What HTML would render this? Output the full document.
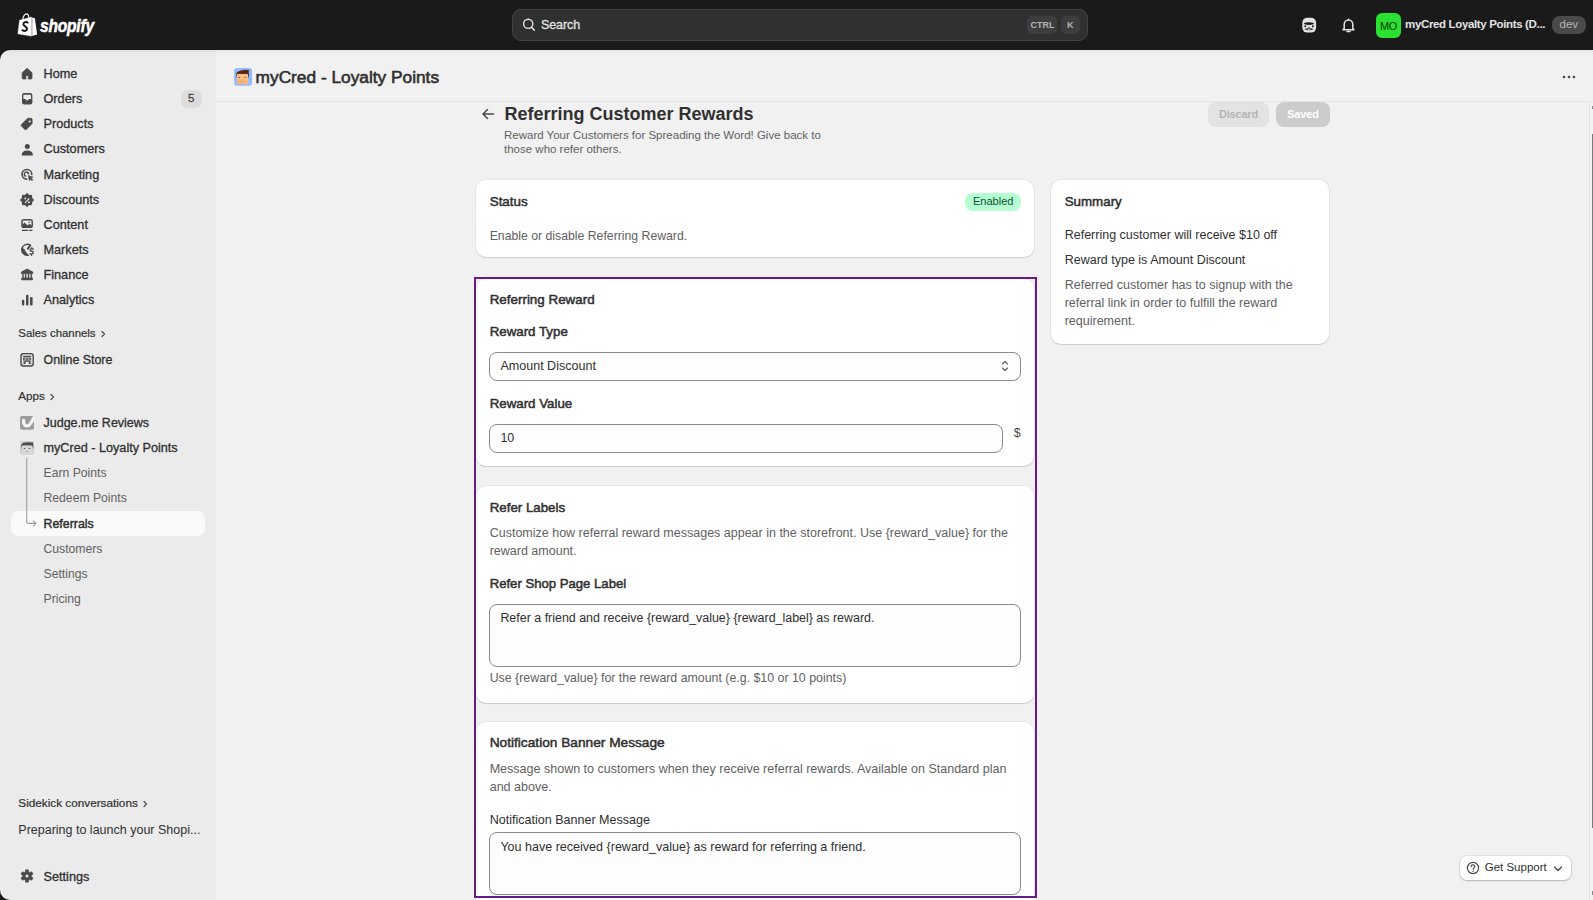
<!DOCTYPE html>
<html><head><meta charset="utf-8">
<style>
*{box-sizing:border-box;margin:0;padding:0}
html,body{width:1593px;height:900px;overflow:hidden;background:#1a1a1a;font-family:"Liberation Sans",sans-serif;color:#303030;position:relative}
.t{position:absolute;white-space:nowrap}
svg{overflow:visible}
</style></head><body>
<div style="position:absolute;left:0px;top:0px;width:1593px;height:50px;background:#1a1a1a"></div>
<svg style="position:absolute;left:17px;top:13px;" width="21" height="24" viewBox="0 0 21 24"><path d="M2.6 7.3 L14.5 4.1 L14.5 23.1 L0.9 20.8 Z" fill="#fff" stroke="#fff" stroke-width="0.5" stroke-linejoin="round"/><path d="M15.2 4.4 L17.9 5.3 L20.1 21.4 L15.2 23.1 Z" fill="#fff"/><path d="M5.8 6.6 C6 3 8 0.9 9.4 0.9 C10.8 0.9 11.6 2.2 11.8 4.6" stroke="#fff" stroke-width="1.1" fill="none"/><path d="M10.6 9.6 C9.4 8.6 6.4 8.8 6.4 11.2 C6.4 13.4 10 13.4 10 15.8 C10 18 7.2 18.4 5.4 17.2" stroke="#1a1a1a" stroke-width="2" fill="none" stroke-linecap="round"/></svg>
<div class="t" style="left:40px;top:16.00px;font-size:18px;line-height:20px;font-weight:bold;color:#fff;font-style:italic;transform:scaleX(0.87);transform-origin:0 0;letter-spacing:-0.3px;-webkit-text-stroke:0.5px #fff">shopify</div>
<div style="position:absolute;left:512px;top:9px;width:576px;height:32px;background:#303030;border:1px solid #444;border-radius:9px;box-sizing:border-box"></div>
<svg style="position:absolute;left:521px;top:17px;" width="16" height="16" viewBox="0 0 16 16"><circle cx="7.2" cy="6.8" r="4.6" stroke="#e3e3e3" stroke-width="1.4" fill="none"/><path d="M10.6 10.4 L13.4 13.2" stroke="#e3e3e3" stroke-width="1.5" stroke-linecap="round"/></svg>
<div class="t" style="left:541px;top:17.00px;font-size:12.5px;line-height:16px;font-weight:normal;color:#e3e3e3;-webkit-text-stroke:0.3px #e3e3e3;letter-spacing:-0.1px">Search</div>
<div style="position:absolute;left:1027px;top:16px;width:30px;height:18px;background:#3d3d3d;border-radius:5px"></div>
<div class="t" style="left:1030.5px;top:19.00px;font-size:9px;line-height:12px;font-weight:bold;color:#b5b5b5;">CTRL</div>
<div style="position:absolute;left:1061px;top:16px;width:19px;height:18px;background:#3d3d3d;border-radius:5px"></div>
<div class="t" style="left:1067px;top:19.00px;font-size:9px;line-height:12px;font-weight:bold;color:#b5b5b5;">K</div>
<svg style="position:absolute;left:1300px;top:16px;" width="18" height="18" viewBox="0 0 18 18"><rect x="2.3" y="1.8" width="13.8" height="14.8" rx="5" fill="#e3e3e3"/><path d="M3.9 6.9 Q9 5.4 13.9 6.9 L13.3 8.3 Q9 9.8 4.5 8.3 Z" fill="#1a1a1a"/><circle cx="5.3" cy="10.2" r="0.95" fill="#1a1a1a"/><circle cx="12.9" cy="10.2" r="0.95" fill="#1a1a1a"/><circle cx="9.1" cy="11.8" r="0.7" fill="#1a1a1a"/><path d="M4.4 13.1 Q9 11.4 13.8 13.1 Q9 15.6 4.4 13.1 Z" fill="#1a1a1a"/><ellipse cx="9.1" cy="13.2" rx="1.7" ry="0.55" fill="#e3e3e3"/></svg>
<svg style="position:absolute;left:1340px;top:17px;" width="17" height="17" viewBox="0 0 17 17"><path d="M4.2 11.6 V7.6 C4.2 5 6 3 8.5 3 C11 3 12.8 5 12.8 7.6 V11.6 L14 12.8 H3 Z" stroke="#e3e3e3" stroke-width="1.5" fill="none" stroke-linejoin="round"/><path d="M7 14.6 H10" stroke="#e3e3e3" stroke-width="1.5" stroke-linecap="round"/><path d="M8.5 1.6 V3" stroke="#e3e3e3" stroke-width="1.4"/></svg>
<div style="position:absolute;left:1376px;top:13px;width:25px;height:25px;background:#2ae031;border-radius:6px"></div>
<div class="t" style="left:1380px;top:19.00px;font-size:11px;line-height:14px;font-weight:normal;color:#0a3a0a;letter-spacing:-0.3px">MO</div>
<div class="t" style="left:1405px;top:17.00px;font-size:11.5px;line-height:15px;font-weight:bold;color:#e3e3e3;letter-spacing:-0.35px">myCred Loyalty Points (D...</div>
<div style="position:absolute;left:1552px;top:16px;width:34px;height:18px;background:#4a4a4a;border-radius:8px"></div>
<div class="t" style="left:1559.5px;top:17.00px;font-size:11.5px;line-height:15px;font-weight:normal;color:#b5b5b5;">dev</div>
<div style="position:absolute;left:0px;top:50px;width:216px;height:850px;background:#ebebeb;border-top-left-radius:10px;border-bottom-left-radius:10px"></div>
<div class="t" style="left:43.5px;top:66.00px;font-size:12.7px;line-height:17px;font-weight:normal;color:#303030;-webkit-text-stroke:0.3px #303030">Home</div>
<svg style="position:absolute;left:17px;top:64px;" width="20" height="20" viewBox="0 0 20 20"><path d="M10.1 4.3 L15 8.7 V14 Q15 15 14 15 H11.3 V11.4 H8.9 V15 H6.2 Q5.2 15 5.2 14 V8.7 Z" fill="#4a4a4a" stroke="#4a4a4a" stroke-width="0.8" stroke-linejoin="round"/></svg>
<div class="t" style="left:43.5px;top:91.00px;font-size:12.7px;line-height:17px;font-weight:normal;color:#303030;-webkit-text-stroke:0.3px #303030">Orders</div>
<svg style="position:absolute;left:17px;top:89px;" width="20" height="20" viewBox="0 0 20 20"><rect x="5" y="4.1" width="10.4" height="11.5" rx="2.3" fill="#4a4a4a"/><path d="M6.5 5.7 H13.9 L14.1 10 H12.2 L10.2 11.8 L8.2 10 H6.3 Z" fill="#ebebeb"/></svg>
<div class="t" style="left:43.5px;top:116.00px;font-size:12.7px;line-height:17px;font-weight:normal;color:#303030;-webkit-text-stroke:0.3px #303030">Products</div>
<svg style="position:absolute;left:17px;top:114px;" width="20" height="20" viewBox="0 0 20 20"><path d="M10.6 4.3 H14 Q15.2 4.3 15.2 5.5 V9.6 L9.4 15.5 Q8.6 16.2 7.8 15.5 L4.4 12.1 Q3.7 11.3 4.4 10.6 Z" fill="#4a4a4a" stroke="#4a4a4a" stroke-width="0.6" stroke-linejoin="round"/><circle cx="12.7" cy="7.5" r="1.1" fill="#ebebeb"/></svg>
<div class="t" style="left:43.5px;top:141.00px;font-size:12.7px;line-height:17px;font-weight:normal;color:#303030;-webkit-text-stroke:0.3px #303030">Customers</div>
<svg style="position:absolute;left:17px;top:139.5px;" width="20" height="20" viewBox="0 0 20 20"><circle cx="10.3" cy="6.4" r="2.5" fill="#4a4a4a"/><path d="M4.7 15.6 Q4.7 10.6 10.3 10.6 Q15.9 10.6 15.9 15.6 Z" fill="#4a4a4a"/></svg>
<div class="t" style="left:43.5px;top:167.00px;font-size:12.7px;line-height:17px;font-weight:normal;color:#303030;-webkit-text-stroke:0.3px #303030">Marketing</div>
<svg style="position:absolute;left:17px;top:165px;" width="20" height="20" viewBox="0 0 20 20"><path d="M14.8 9.4 A4.9 4.9 0 1 0 9.8 14.3" stroke="#4a4a4a" stroke-width="1.6" fill="none" stroke-linecap="round"/><path d="M11.6 8.8 A2.2 2.2 0 1 0 8.4 11.2" stroke="#4a4a4a" stroke-width="1.5" fill="none" stroke-linecap="round"/><path d="M11.3 10.6 L16.1 12.1 L14.1 13 L15.9 14.8 L14.9 15.8 L13.1 14 L12.3 15.9 Z" fill="#4a4a4a" stroke="#4a4a4a" stroke-width="0.5" stroke-linejoin="round"/></svg>
<div class="t" style="left:43.5px;top:192.00px;font-size:12.7px;line-height:17px;font-weight:normal;color:#303030;-webkit-text-stroke:0.3px #303030">Discounts</div>
<svg style="position:absolute;left:17px;top:190px;" width="20" height="20" viewBox="0 0 20 20"><path d="M10.00 3.20 L10.27 3.23 L10.52 3.34 L10.77 3.49 L11.00 3.69 L11.21 3.92 L11.40 4.15 L11.59 4.37 L11.77 4.57 L11.95 4.72 L12.14 4.83 L12.36 4.89 L12.59 4.91 L12.86 4.90 L13.14 4.87 L13.44 4.84 L13.75 4.83 L14.06 4.85 L14.34 4.92 L14.60 5.03 L14.81 5.19 L14.97 5.40 L15.08 5.66 L15.15 5.94 L15.17 6.25 L15.16 6.56 L15.13 6.86 L15.10 7.14 L15.09 7.41 L15.11 7.64 L15.17 7.86 L15.28 8.05 L15.43 8.23 L15.63 8.41 L15.85 8.60 L16.08 8.79 L16.31 9.00 L16.51 9.23 L16.66 9.48 L16.77 9.73 L16.80 10.00 L16.77 10.27 L16.66 10.52 L16.51 10.77 L16.31 11.00 L16.08 11.21 L15.85 11.40 L15.63 11.59 L15.43 11.77 L15.28 11.95 L15.17 12.14 L15.11 12.36 L15.09 12.59 L15.10 12.86 L15.13 13.14 L15.16 13.44 L15.17 13.75 L15.15 14.06 L15.08 14.34 L14.97 14.60 L14.81 14.81 L14.60 14.97 L14.34 15.08 L14.06 15.15 L13.75 15.17 L13.44 15.16 L13.14 15.13 L12.86 15.10 L12.59 15.09 L12.36 15.11 L12.14 15.17 L11.95 15.28 L11.77 15.43 L11.59 15.63 L11.40 15.85 L11.21 16.08 L11.00 16.31 L10.77 16.51 L10.52 16.66 L10.27 16.77 L10.00 16.80 L9.73 16.77 L9.48 16.66 L9.23 16.51 L9.00 16.31 L8.79 16.08 L8.60 15.85 L8.41 15.63 L8.23 15.43 L8.05 15.28 L7.86 15.17 L7.64 15.11 L7.41 15.09 L7.14 15.10 L6.86 15.13 L6.56 15.16 L6.25 15.17 L5.94 15.15 L5.66 15.08 L5.40 14.97 L5.19 14.81 L5.03 14.60 L4.92 14.34 L4.85 14.06 L4.83 13.75 L4.84 13.44 L4.87 13.14 L4.90 12.86 L4.91 12.59 L4.89 12.36 L4.83 12.14 L4.72 11.95 L4.57 11.77 L4.37 11.59 L4.15 11.40 L3.92 11.21 L3.69 11.00 L3.49 10.77 L3.34 10.52 L3.23 10.27 L3.20 10.00 L3.23 9.73 L3.34 9.48 L3.49 9.23 L3.69 9.00 L3.92 8.79 L4.15 8.60 L4.37 8.41 L4.57 8.23 L4.72 8.05 L4.83 7.86 L4.89 7.64 L4.91 7.41 L4.90 7.14 L4.87 6.86 L4.84 6.56 L4.83 6.25 L4.85 5.94 L4.92 5.66 L5.03 5.40 L5.19 5.19 L5.40 5.03 L5.66 4.92 L5.94 4.85 L6.25 4.83 L6.56 4.84 L6.86 4.87 L7.14 4.90 L7.41 4.91 L7.64 4.89 L7.86 4.83 L8.05 4.72 L8.23 4.57 L8.41 4.37 L8.60 4.15 L8.79 3.92 L9.00 3.69 L9.23 3.49 L9.48 3.34 L9.73 3.23 Z" fill="#4a4a4a"/><circle cx="8.2" cy="8.4" r="0.95" fill="#ebebeb"/><circle cx="12" cy="12.2" r="0.95" fill="#ebebeb"/><path d="M8.3 12.6 L12 8.6" stroke="#ebebeb" stroke-width="1.1" stroke-linecap="round"/></svg>
<div class="t" style="left:43.5px;top:217.00px;font-size:12.7px;line-height:17px;font-weight:normal;color:#303030;-webkit-text-stroke:0.3px #303030">Content</div>
<svg style="position:absolute;left:17px;top:215px;" width="20" height="20" viewBox="0 0 20 20"><rect x="5" y="4.8" width="10.2" height="7.4" rx="1.8" stroke="#4a4a4a" stroke-width="1.5" fill="none"/><path d="M5 10.2 L7.6 7.6 L10.6 10.6 L12.6 8.8 L15.2 11 V12.4 H5 Z" fill="#4a4a4a"/><circle cx="12.1" cy="7.3" r="0.8" fill="#4a4a4a"/><path d="M5.3 15.4 H10.9 M12.6 15.4 H15.1" stroke="#4a4a4a" stroke-width="1.1" stroke-linecap="round"/></svg>
<div class="t" style="left:43.5px;top:242.00px;font-size:12.7px;line-height:17px;font-weight:normal;color:#303030;-webkit-text-stroke:0.3px #303030">Markets</div>
<svg style="position:absolute;left:17px;top:238px;" width="20" height="20" viewBox="0 0 20 20"><path d="M13.6 7.4 A5.5 5.5 0 1 0 11.2 17.2" stroke="#4a4a4a" stroke-width="1.5" fill="none" stroke-linecap="round"/><path d="M4.8 9.6 Q6.6 10.4 7.8 11.6 Q8.2 13.6 9.4 14.6 Q10.8 15.6 11.2 17.4 Q7.6 17.6 5.6 15 Q4.2 12.6 4.8 9.6 Z" fill="#4a4a4a"/><path d="M12.8 8 L10.9 10.6" stroke="#4a4a4a" stroke-width="2.1" stroke-linecap="round"/><path d="M16.3 10.9 H14.3 Q13.1 10.9 13.1 12.1 Q13.1 13.2 14.3 13.2 H15 Q16.3 13.2 16.3 14.5 Q16.3 15.8 15 15.8 H12.9 M14.8 9.6 V10.9 M14.5 15.8 V17.3" stroke="#4a4a4a" stroke-width="1.35" fill="none" stroke-linecap="round" stroke-linejoin="round"/></svg>
<div class="t" style="left:43.5px;top:267.00px;font-size:12.7px;line-height:17px;font-weight:normal;color:#303030;-webkit-text-stroke:0.3px #303030">Finance</div>
<svg style="position:absolute;left:17px;top:265px;" width="20" height="20" viewBox="0 0 20 20"><path d="M10.1 4 L15.8 7 V8.6 H4.4 V7 Z" fill="#4a4a4a" stroke="#4a4a4a" stroke-width="0.8" stroke-linejoin="round"/><rect x="4.3" y="12.6" width="11.6" height="2.7" rx="0.8" fill="#4a4a4a"/><path d="M6 8.4 V12.8 M8.6 8.4 V12.8 M11.5 8.4 V12.8 M14.2 8.4 V12.8" stroke="#4a4a4a" stroke-width="1.4"/></svg>
<div class="t" style="left:43.5px;top:292.00px;font-size:12.7px;line-height:17px;font-weight:normal;color:#303030;-webkit-text-stroke:0.3px #303030">Analytics</div>
<svg style="position:absolute;left:17px;top:290px;" width="20" height="20" viewBox="0 0 20 20"><rect x="4.9" y="9.8" width="2.4" height="5.7" rx="1" fill="#4a4a4a"/><rect x="9" y="4.8" width="2.5" height="10.7" rx="1" fill="#4a4a4a"/><rect x="13" y="7" width="2.6" height="8.5" rx="1" fill="#4a4a4a"/></svg>
<svg style="position:absolute;left:17px;top:350px;" width="20" height="20" viewBox="0 0 20 20"><rect x="4" y="3.6" width="12.2" height="12.4" rx="2.2" fill="#a8a8a8" stroke="#4a4a4a" stroke-width="1.4"/><rect x="5.4" y="5" width="9.4" height="9.6" rx="1.2" fill="none" stroke="#f0f0f0" stroke-width="0.9"/><path d="M6.4 6.5 H13.8" stroke="#4a4a4a" stroke-width="1"/><rect x="6.1" y="8.2" width="1.6" height="1.6" fill="#4a4a4a"/><rect x="9.3" y="8.2" width="1.6" height="1.6" fill="#4a4a4a"/><rect x="12.4" y="8.2" width="1.6" height="1.6" fill="#4a4a4a"/><path d="M7.8 14 V11.8 Q7.8 11 8.6 11 H11.8 Q12.6 11 12.6 11.8 V14" stroke="#4a4a4a" stroke-width="1.2" fill="none"/><rect x="9.1" y="12" width="2.2" height="2.6" fill="#f5f5f5"/></svg>
<svg style="position:absolute;left:17px;top:413px;" width="20" height="20" viewBox="0 0 20 20"><rect x="3" y="3" width="14" height="13.8" rx="2" fill="#9c9c9c"/><path d="M6.6 7.4 Q6.2 12.6 10 13 Q12.6 13.2 16.6 5.2" stroke="#f5f5f5" stroke-width="3.2" fill="none" stroke-linecap="round"/></svg>
<svg style="position:absolute;left:17px;top:438.25px;" width="20" height="20" viewBox="0 0 20 20"><rect x="3" y="3" width="14" height="13.6" rx="2" fill="#cfcfcf"/><path d="M4.6 16.6 V8.4 H15.4 V16.6 Z" fill="#d8d8d8"/><path d="M4 11.4 Q3.6 5.4 6.4 4.8 Q10 3.8 14.2 4.4 L15.8 4.2 Q16.6 6 16.2 11.4 L15.4 7.6 Q10 7 4.8 7.6 Z" fill="#4a4a4a"/><rect x="6.6" y="10" width="1.8" height="0.9" rx="0.4" fill="#555"/><rect x="11.6" y="10" width="1.8" height="0.9" rx="0.4" fill="#555"/><path d="M8.6 13.6 H11.4" stroke="#9a9a9a" stroke-width="0.7"/></svg>
<svg style="position:absolute;left:17px;top:866px;" width="20" height="20" viewBox="0 0 20 20"><path d="M10.00 3.70 L10.33 3.71 L10.66 3.73 L10.99 3.78 L11.31 3.84 L11.51 4.37 L11.56 5.21 L11.58 5.89 L11.79 5.98 L12.00 6.08 L12.20 6.19 L12.40 6.31 L12.59 6.44 L12.77 6.58 L13.37 6.26 L14.12 5.88 L14.68 5.78 L14.90 6.04 L15.10 6.30 L15.28 6.57 L15.46 6.85 L15.61 7.14 L15.76 7.44 L15.88 7.74 L15.99 8.05 L15.63 8.49 L14.92 8.95 L14.35 9.31 L14.38 9.54 L14.39 9.77 L14.40 10.00 L14.39 10.23 L14.38 10.46 L14.35 10.69 L14.92 11.05 L15.63 11.51 L15.99 11.95 L15.88 12.26 L15.76 12.56 L15.61 12.86 L15.46 13.15 L15.28 13.43 L15.10 13.70 L14.90 13.96 L14.68 14.22 L14.12 14.12 L13.37 13.74 L12.77 13.42 L12.59 13.56 L12.40 13.69 L12.20 13.81 L12.00 13.92 L11.79 14.02 L11.58 14.11 L11.56 14.79 L11.51 15.63 L11.31 16.16 L10.99 16.22 L10.66 16.27 L10.33 16.29 L10.00 16.30 L9.67 16.29 L9.34 16.27 L9.01 16.22 L8.69 16.16 L8.49 15.63 L8.44 14.79 L8.42 14.11 L8.21 14.02 L8.00 13.92 L7.80 13.81 L7.60 13.69 L7.41 13.56 L7.23 13.42 L6.63 13.74 L5.88 14.12 L5.32 14.22 L5.10 13.96 L4.90 13.70 L4.72 13.43 L4.54 13.15 L4.39 12.86 L4.24 12.56 L4.12 12.26 L4.01 11.95 L4.37 11.51 L5.08 11.05 L5.65 10.69 L5.62 10.46 L5.61 10.23 L5.60 10.00 L5.61 9.77 L5.62 9.54 L5.65 9.31 L5.08 8.95 L4.37 8.49 L4.01 8.05 L4.12 7.74 L4.24 7.44 L4.39 7.14 L4.54 6.85 L4.72 6.57 L4.90 6.30 L5.10 6.04 L5.32 5.78 L5.88 5.88 L6.63 6.26 L7.23 6.58 L7.41 6.44 L7.60 6.31 L7.80 6.19 L8.00 6.08 L8.21 5.98 L8.42 5.89 L8.44 5.21 L8.49 4.37 L8.69 3.84 L9.01 3.78 L9.34 3.73 L9.67 3.71 Z" fill="#4a4a4a" stroke="#4a4a4a" stroke-width="0.6" stroke-linejoin="round"/><circle cx="10" cy="10" r="1.5" fill="#ebebeb"/></svg>
<div style="position:absolute;left:181px;top:90px;width:21px;height:18px;background:#dcdcdc;border-radius:7px"></div>
<div class="t" style="left:188px;top:91.00px;font-size:11.5px;line-height:15px;font-weight:normal;color:#4a4a4a;-webkit-text-stroke:0.3px #4a4a4a">5</div>
<div class="t" style="left:18.3px;top:326.00px;font-size:11.4px;line-height:15px;font-weight:normal;color:#303030;-webkit-text-stroke:0.2px #303030">Sales channels</div>
<svg style="position:absolute;left:99px;top:329px;" width="8" height="10" viewBox="0 0 8 10"><path d="M3 2.5 L5.5 5 L3 7.5" stroke="#4a4a4a" stroke-width="1.2" fill="none" stroke-linecap="round" stroke-linejoin="round"/></svg>
<div class="t" style="left:43.5px;top:352.00px;font-size:12.4px;line-height:16px;font-weight:normal;color:#303030;-webkit-text-stroke:0.3px #303030">Online Store</div>
<div class="t" style="left:18.3px;top:388.00px;font-size:11.6px;line-height:15px;font-weight:normal;color:#303030;-webkit-text-stroke:0.2px #303030">Apps</div>
<svg style="position:absolute;left:48px;top:392px;" width="8" height="10" viewBox="0 0 8 10"><path d="M3 2.5 L5.5 5 L3 7.5" stroke="#4a4a4a" stroke-width="1.2" fill="none" stroke-linecap="round" stroke-linejoin="round"/></svg>
<div class="t" style="left:43.5px;top:415.00px;font-size:12.5px;line-height:16px;font-weight:normal;color:#303030;-webkit-text-stroke:0.3px #303030">Judge.me Reviews</div>
<div class="t" style="left:43.5px;top:440.00px;font-size:12.65px;line-height:16px;font-weight:normal;color:#303030;-webkit-text-stroke:0.3px #303030">myCred - Loyalty Points</div>
<div style="position:absolute;left:11px;top:511px;width:194px;height:25px;background:#fafafa;border-radius:8px"></div>
<div class="t" style="left:43.5px;top:465.00px;font-size:12.2px;line-height:16px;font-weight:normal;color:#616161;">Earn Points</div>
<div class="t" style="left:43.5px;top:490.00px;font-size:12.2px;line-height:16px;font-weight:normal;color:#616161;">Redeem Points</div>
<div class="t" style="left:43.5px;top:516.00px;font-size:12.4px;line-height:16px;font-weight:normal;color:#303030;-webkit-text-stroke:0.45px #303030">Referrals</div>
<div class="t" style="left:43.5px;top:541.00px;font-size:12.2px;line-height:16px;font-weight:normal;color:#616161;">Customers</div>
<div class="t" style="left:43.5px;top:566.00px;font-size:12.2px;line-height:16px;font-weight:normal;color:#616161;">Settings</div>
<div class="t" style="left:43.5px;top:591.00px;font-size:12.2px;line-height:16px;font-weight:normal;color:#616161;">Pricing</div>
<svg style="position:absolute;left:20px;top:455px;" width="20" height="75" viewBox="0 0 20 75"><path d="M6.7 2.7 V66.6 Q6.7 68.4 8.5 68.4 H16" stroke="#9e9e9e" stroke-width="1.1" fill="none"/><path d="M13.3 66 L16.1 68.4 L13.3 70.8" stroke="#9e9e9e" stroke-width="1.1" fill="none" stroke-linecap="round" stroke-linejoin="round"/></svg>
<div class="t" style="left:18.3px;top:795.00px;font-size:11.75px;line-height:15px;font-weight:normal;color:#303030;-webkit-text-stroke:0.2px #303030">Sidekick conversations</div>
<svg style="position:absolute;left:141px;top:799px;" width="8" height="10" viewBox="0 0 8 10"><path d="M3 2.5 L5.5 5 L3 7.5" stroke="#4a4a4a" stroke-width="1.2" fill="none" stroke-linecap="round" stroke-linejoin="round"/></svg>
<div class="t" style="left:18.3px;top:822.00px;font-size:12.5px;line-height:16px;font-weight:normal;color:#303030;">Preparing to launch your Shopi...</div>
<div class="t" style="left:43.5px;top:869.00px;font-size:12.7px;line-height:17px;font-weight:normal;color:#303030;-webkit-text-stroke:0.3px #303030">Settings</div>
<div style="position:absolute;left:216px;top:50px;width:1377px;height:850px;background:#f1f1f1"></div>
<div style="position:absolute;left:216px;top:101px;width:1377px;height:1px;background:#e6e6e6"></div>
<div class="t" style="left:255.6px;top:66.00px;font-size:17.3px;line-height:22px;font-weight:normal;color:#303030;-webkit-text-stroke:0.6px #303030">myCred - Loyalty Points</div>
<svg style="position:absolute;left:232px;top:66px;" width="22" height="22" viewBox="0 0 22 22"><rect x="2.1" y="2.1" width="17.9" height="17.7" rx="3" fill="#92bbff"/><path d="M4.9 7.6 H16.1 V18.1 H4.9 Z" fill="#f6bf86"/><path d="M4.9 14 H16.1 V18.1 H4.9 Z" fill="#f8b37a"/><path d="M4 12.6 Q3.6 6.4 6 5.6 Q8 5 9 4.4 Q13 3.4 17.8 4.2 L16.6 5.4 Q17.4 9 16.4 12.6 L15.8 8 H5 Z" fill="#5a2a14"/><ellipse cx="7.3" cy="11.5" rx="0.9" ry="0.6" fill="#555"/><ellipse cx="13.2" cy="11.5" rx="0.9" ry="0.6" fill="#555"/><path d="M8.6 15.4 H12.4" stroke="#c99a6a" stroke-width="0.6"/></svg>
<svg style="position:absolute;left:1561px;top:71px;" width="16" height="12" viewBox="0 0 16 12"><circle cx="3" cy="6" r="1.3" fill="#4a4a4a"/><circle cx="8" cy="6" r="1.3" fill="#4a4a4a"/><circle cx="13" cy="6" r="1.3" fill="#4a4a4a"/></svg>
<div style="position:absolute;left:1589px;top:102px;width:1px;height:798px;background:#e0e0e0"></div>
<div style="position:absolute;left:1590px;top:102px;width:3px;height:798px;background:#f3f3f3"></div>
<div style="position:absolute;left:1592px;top:134px;width:1px;height:694px;background:#7a7a7a"></div>
<div style="position:absolute;left:1592px;top:106px;width:1px;height:3px;background:#8a8a8a"></div>
<div style="position:absolute;left:1592px;top:891px;width:1px;height:4px;background:#8a8a8a"></div>
<svg style="position:absolute;left:480px;top:106px;" width="16" height="16" viewBox="0 0 16 16"><path d="M13.5 8 H3 M7.5 3.5 L3 8 L7.5 12.5" stroke="#4a4a4a" stroke-width="1.5" fill="none" stroke-linecap="round" stroke-linejoin="round"/></svg>
<div class="t" style="left:504.5px;top:103.00px;font-size:18px;line-height:23px;font-weight:bold;color:#303030;">Referring Customer Rewards</div>
<div class="t" style="left:504px;top:128.00px;font-size:11.5px;line-height:14px;font-weight:normal;color:#616161;">Reward Your Customers for Spreading the Word! Give back to</div>
<div class="t" style="left:504px;top:142.00px;font-size:11.5px;line-height:14px;font-weight:normal;color:#616161;">those who refer others.</div>
<div style="position:absolute;left:1208px;top:102px;width:61px;height:25px;background:#e3e3e3;border-radius:8px"></div>
<div class="t" style="left:1219px;top:107.00px;font-size:11px;line-height:14px;font-weight:bold;color:#b5b5b5;letter-spacing:-0.2px">Discard</div>
<div style="position:absolute;left:1276px;top:102px;width:54px;height:25px;background:#cccccc;border-radius:8px"></div>
<div class="t" style="left:1287px;top:107.00px;font-size:11px;line-height:14px;font-weight:bold;color:#ffffff;letter-spacing:-0.1px">Saved</div>
<div style="position:absolute;left:476px;top:180px;width:558px;height:77px;background:#fff;border-radius:10px;box-shadow:0 1px 1px rgba(0,0,0,.12),0 0 0 1px rgba(0,0,0,.035)"></div>
<div class="t" style="left:489.7px;top:193.00px;font-size:13.42px;line-height:17px;font-weight:normal;color:#303030;-webkit-text-stroke:0.5px #303030">Status</div>
<div style="position:absolute;left:965px;top:193px;width:56px;height:18px;background:#b4fed2;border-radius:8px"></div>
<div class="t" style="left:973px;top:194.00px;font-size:11px;line-height:14px;font-weight:normal;color:#0c5132;">Enabled</div>
<div class="t" style="left:489.7px;top:228.00px;font-size:12.25px;line-height:16px;font-weight:normal;color:#616161;">Enable or disable Referring Reward.</div>
<div style="position:absolute;left:1051px;top:180px;width:278px;height:164px;background:#fff;border-radius:10px;box-shadow:0 1px 1px rgba(0,0,0,.12),0 0 0 1px rgba(0,0,0,.035)"></div>
<div class="t" style="left:1064.7px;top:193.00px;font-size:13.35px;line-height:17px;font-weight:normal;color:#303030;-webkit-text-stroke:0.5px #303030">Summary</div>
<div class="t" style="left:1064.7px;top:227.00px;font-size:12.5px;line-height:16px;font-weight:normal;color:#303030;">Referring customer will receive $10 off</div>
<div class="t" style="left:1064.7px;top:252.00px;font-size:12.5px;line-height:16px;font-weight:normal;color:#303030;">Reward type is Amount Discount</div>
<div class="t" style="left:1064.7px;top:277.00px;font-size:12.5px;line-height:16px;font-weight:normal;color:#616161;">Referred customer has to signup with the</div>
<div class="t" style="left:1064.7px;top:295.00px;font-size:12.5px;line-height:16px;font-weight:normal;color:#616161;">referral link in order to fulfill the reward</div>
<div class="t" style="left:1064.7px;top:313.00px;font-size:12.5px;line-height:16px;font-weight:normal;color:#616161;">requirement.</div>
<div style="position:absolute;left:474px;top:277px;width:563px;height:621px;border:2px solid #651b8a;box-sizing:border-box"></div>
<div style="position:absolute;left:476px;top:279px;width:558px;height:187px;background:#fff;border-radius:10px;box-shadow:0 1px 1px rgba(0,0,0,.12),0 0 0 1px rgba(0,0,0,.035)"></div>
<div class="t" style="left:489.7px;top:291.00px;font-size:13.4px;line-height:17px;font-weight:normal;color:#303030;-webkit-text-stroke:0.5px #303030">Referring Reward</div>
<div class="t" style="left:489.7px;top:323.00px;font-size:13.3px;line-height:17px;font-weight:normal;color:#303030;-webkit-text-stroke:0.5px #303030">Reward Type</div>
<div style="position:absolute;left:489px;top:352px;width:532px;height:29px;background:#fdfdfd;border:1px solid #8a8a8a;border-radius:8px;box-sizing:border-box"></div>
<div class="t" style="left:500.4px;top:358.00px;font-size:12.55px;line-height:16px;font-weight:normal;color:#303030;">Amount Discount</div>
<svg style="position:absolute;left:999px;top:359px;" width="12" height="14" viewBox="0 0 12 14"><path d="M3.5 5 L6 2.5 L8.5 5 M3.5 9 L6 11.5 L8.5 9" stroke="#5a5a5a" stroke-width="1.1" fill="none" stroke-linecap="round" stroke-linejoin="round"/></svg>
<div class="t" style="left:489.7px;top:395.00px;font-size:13.3px;line-height:17px;font-weight:normal;color:#303030;-webkit-text-stroke:0.5px #303030">Reward Value</div>
<div style="position:absolute;left:489px;top:424px;width:514px;height:29px;background:#fdfdfd;border:1px solid #8a8a8a;border-radius:8px;box-sizing:border-box"></div>
<div class="t" style="left:500.4px;top:430.00px;font-size:12.5px;line-height:16px;font-weight:normal;color:#303030;">10</div>
<div class="t" style="left:1013.8px;top:425.00px;font-size:12.5px;line-height:16px;font-weight:normal;color:#4a4a4a;">$</div>
<div style="position:absolute;left:476px;top:486px;width:558px;height:217px;background:#fff;border-radius:10px;box-shadow:0 1px 1px rgba(0,0,0,.12),0 0 0 1px rgba(0,0,0,.035)"></div>
<div class="t" style="left:489.7px;top:499.00px;font-size:13.3px;line-height:17px;font-weight:normal;color:#303030;-webkit-text-stroke:0.5px #303030">Refer Labels</div>
<div class="t" style="left:489.7px;top:525.00px;font-size:12.5px;line-height:16px;font-weight:normal;color:#616161;">Customize how referral reward messages appear in the storefront. Use {reward_value} for the</div>
<div class="t" style="left:489.7px;top:543.00px;font-size:12.5px;line-height:16px;font-weight:normal;color:#616161;">reward amount.</div>
<div class="t" style="left:489.7px;top:575.00px;font-size:13.13px;line-height:17px;font-weight:normal;color:#303030;-webkit-text-stroke:0.5px #303030">Refer Shop Page Label</div>
<div style="position:absolute;left:489px;top:604px;width:532px;height:63px;background:#fdfdfd;border:1px solid #8a8a8a;border-radius:8px;box-sizing:border-box"></div>
<div class="t" style="left:500.4px;top:610.00px;font-size:12.45px;line-height:16px;font-weight:normal;color:#303030;">Refer a friend and receive {reward_value} {reward_label} as reward.</div>
<div class="t" style="left:489.7px;top:670.00px;font-size:12.36px;line-height:16px;font-weight:normal;color:#616161;">Use {reward_value} for the reward amount (e.g. $10 or 10 points)</div>
<div style="position:absolute;left:476px;top:722px;width:558px;height:200px;background:#fff;border-radius:10px;box-shadow:0 1px 1px rgba(0,0,0,.12),0 0 0 1px rgba(0,0,0,.035)"></div>
<div class="t" style="left:489.7px;top:734.00px;font-size:13.7px;line-height:18px;font-weight:normal;color:#303030;-webkit-text-stroke:0.5px #303030">Notification Banner Message</div>
<div class="t" style="left:489.7px;top:761.00px;font-size:12.52px;line-height:16px;font-weight:normal;color:#616161;">Message shown to customers when they receive referral rewards. Available on Standard plan</div>
<div class="t" style="left:489.7px;top:779.00px;font-size:12.52px;line-height:16px;font-weight:normal;color:#616161;">and above.</div>
<div class="t" style="left:489.7px;top:812.00px;font-size:12.54px;line-height:16px;font-weight:normal;color:#303030;">Notification Banner Message</div>
<div style="position:absolute;left:489px;top:832px;width:532px;height:63px;background:#fdfdfd;border:1px solid #8a8a8a;border-radius:8px;box-sizing:border-box"></div>
<div class="t" style="left:500.4px;top:839.00px;font-size:12.54px;line-height:16px;font-weight:normal;color:#303030;">You have received {reward_value} as reward for referring a friend.</div>
<div style="position:absolute;left:474px;top:896px;width:563px;height:2px;background:#651b8a"></div>
<div style="position:absolute;left:9px;top:50px;width:1584px;height:4px;background:linear-gradient(rgba(0,0,0,0.055),rgba(0,0,0,0))"></div>
<div style="position:absolute;left:1460px;top:856px;width:111px;height:24px;background:#fff;border-radius:7px;box-shadow:0 1px 2px rgba(0,0,0,.2),0 0 0 1px rgba(0,0,0,.06)"></div>
<svg style="position:absolute;left:1466px;top:861px;" width="14" height="14" viewBox="0 0 14 14"><circle cx="7" cy="7" r="5.6" stroke="#4a4a4a" stroke-width="1.2" fill="none"/><path d="M5.2 5.6 C5.2 4.4 6 3.8 7 3.8 C8 3.8 8.8 4.5 8.8 5.4 C8.8 6.6 7.2 6.8 7.2 8.2" stroke="#4a4a4a" stroke-width="1.2" fill="none" stroke-linecap="round"/><circle cx="7.1" cy="10.2" r="0.8" fill="#4a4a4a"/></svg>
<div class="t" style="left:1484.7px;top:860.00px;font-size:11.5px;line-height:15px;font-weight:normal;color:#303030;">Get Support</div>
<svg style="position:absolute;left:1552px;top:864px;" width="12" height="10" viewBox="0 0 12 10"><path d="M2.5 3 L6 6.5 L9.5 3" stroke="#4a4a4a" stroke-width="1.3" fill="none" stroke-linecap="round" stroke-linejoin="round"/></svg>
</body></html>
